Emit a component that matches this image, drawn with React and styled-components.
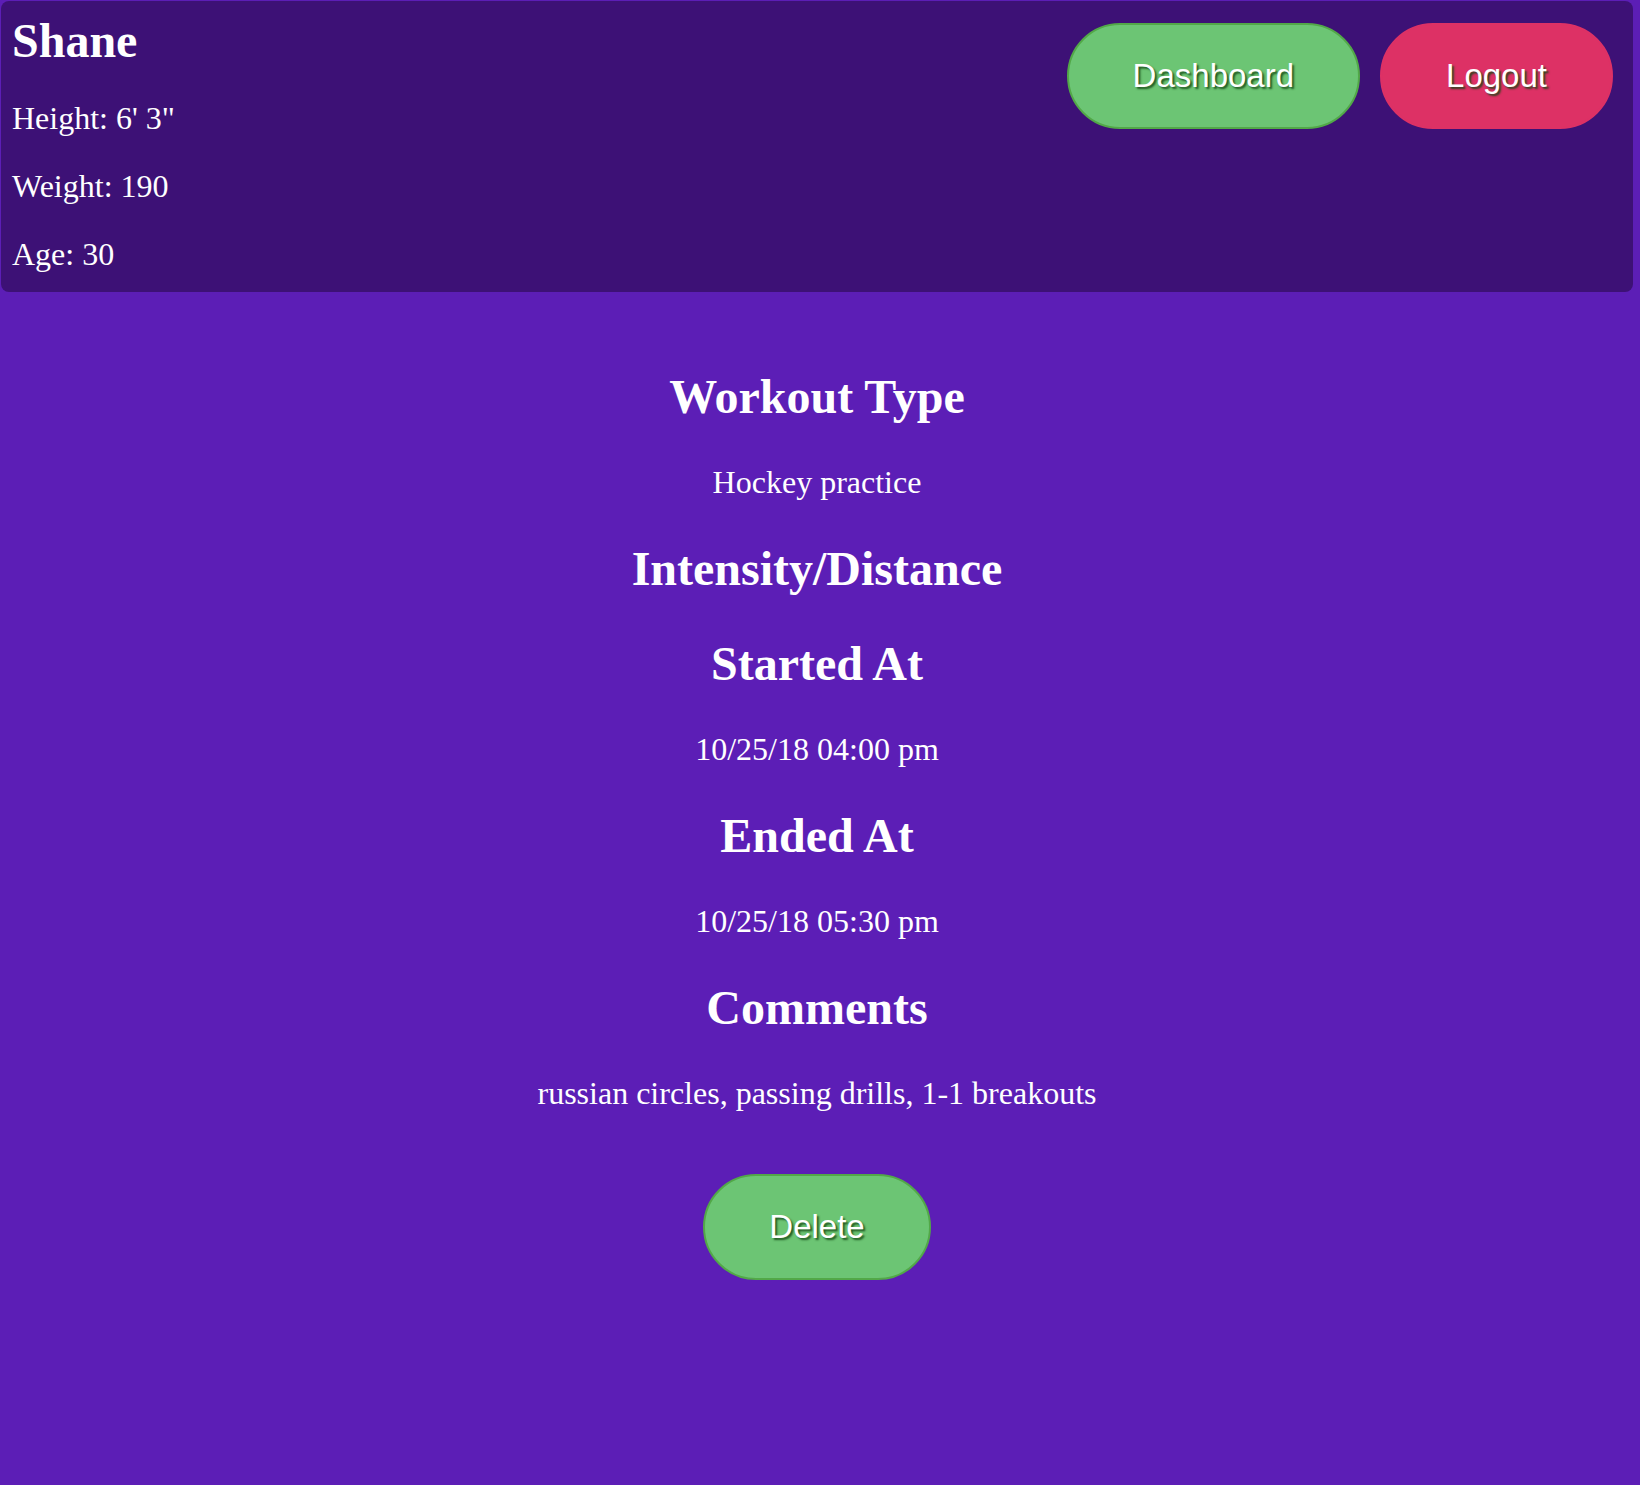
import React from "react";
import styled, { createGlobalStyle } from "styled-components";

const GlobalStyle = createGlobalStyle`
  html, body {
    margin: 0;
    padding: 0;
    min-height: 100%;
    background: #5c1eb6;
  }
  body {
    font-family: "Liberation Serif", "Times New Roman", serif;
    color: #ffffff;
    min-height: 1485px;
  }
`;

const Page = styled.div`
  width: 1634px;
`;

const Header = styled.header`
  margin: 1px;
  box-sizing: border-box;
  height: 291px;
  padding: 12px 20px 0 11px;
  background: #3d1176;
  border-radius: 8px;
  display: flex;
  justify-content: space-between;
  align-items: flex-start;
`;

const Profile = styled.div`
  display: flex;
  flex-direction: column;
`;

const Name = styled.h2`
  margin: 0 0 1px;
  font-size: 48px;
  font-weight: bold;
`;

const Stat = styled.p`
  margin: 31px 0 0;
  font-size: 32px;
`;

const Actions = styled.nav`
  display: flex;
  gap: 20px;
  margin-top: 10px;
`;

const Button = styled.button`
  box-sizing: border-box;
  font-family: "Liberation Sans", Arial, sans-serif;
  font-size: 33px;
  line-height: normal;
  color: #ffffff;
  text-shadow: 2px 2px 2px rgba(20, 70, 20, 0.85);
  padding: 32px 64px;
  border-radius: 999px;
  border: 2px solid ${(p) => (p.$variant === "danger" ? "#dd3165" : "#52a848")};
  background: ${(p) => (p.$variant === "danger" ? "#dd3165" : "#6cc574")};
  cursor: pointer;
`;

const Main = styled.main`
  padding-top: 36px;
  text-align: center;
`;

const Heading = styled.h2`
  margin: 40px 0;
  font-size: 48px;
  font-weight: bold;
`;

const Value = styled.p`
  margin: 32px 0;
  font-size: 32px;
`;

const ButtonRow = styled.div`
  margin-top: 62px;
`;

const sections = [
  { title: "Workout Type", value: "Hockey practice" },
  { title: "Intensity/Distance", value: null },
  { title: "Started At", value: "10/25/18 04:00 pm" },
  { title: "Ended At", value: "10/25/18 05:30 pm" },
  { title: "Comments", value: "russian circles, passing drills, 1-1 breakouts" },
];

export default function App() {
  return (
    <Page>
      <GlobalStyle />
      <Header>
        <Profile>
          <Name>Shane</Name>
          <Stat>Height: 6' 3"</Stat>
          <Stat>Weight: 190</Stat>
          <Stat>Age: 30</Stat>
        </Profile>
        <Actions>
          <Button>Dashboard</Button>
          <Button $variant="danger">Logout</Button>
        </Actions>
      </Header>
      <Main>
        {sections.map((s) => (
          <React.Fragment key={s.title}>
            <Heading>{s.title}</Heading>
            {s.value && <Value>{s.value}</Value>}
          </React.Fragment>
        ))}
        <ButtonRow>
          <Button>Delete</Button>
        </ButtonRow>
      </Main>
    </Page>
  );
}
